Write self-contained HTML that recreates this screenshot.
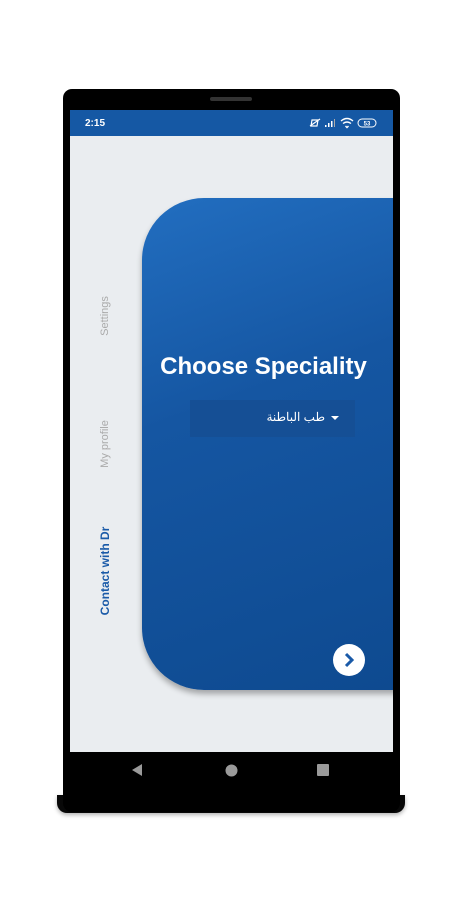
<!DOCTYPE html>
<html><head><meta charset="utf-8"><style>
*{margin:0;padding:0;box-sizing:border-box}
body{width:462px;height:901px;background:#fff;position:relative;overflow:hidden;font-family:"Liberation Sans",sans-serif}
.phone{position:absolute;left:63px;top:89px;width:337px;height:723px;background:#000;border-radius:9px}
.chin{position:absolute;left:57px;top:795px;width:348px;height:18px;background:#080808;border-radius:0 0 10px 10px;box-shadow:0 2px 4px rgba(0,0,0,.3)}
.speaker{position:absolute;left:210px;top:97px;width:42px;height:4px;background:#333;border-radius:2px}
.screen{position:absolute;left:70px;top:110px;width:323px;height:642px;background:#eaedf0;overflow:hidden}
.status{position:absolute;left:0;top:0;width:323px;height:26px;background:#1558a4;color:#fff;font-size:10px;font-weight:bold}
.card{position:absolute;left:72px;top:88px;width:260px;height:492px;border-radius:62px 0 0 62px;background:linear-gradient(160deg,#226ec0 0%,#1556a2 40%,#0e4a90 100%);box-shadow:0 4px 6px rgba(0,0,0,.3)}
.v{position:absolute;transform:rotate(-90deg);white-space:nowrap;font-size:11px;color:#aaa;transform-origin:center}
.nav{position:absolute;fill:#9a9a9a}
</style></head><body>
<div class="chin"></div>
<div class="phone"></div>
<div class="speaker"></div>
<div class="screen">
 <div class="status">
  <span style="position:absolute;left:15px;top:8px">2:15</span>
  <svg style="position:absolute;left:238px;top:6px" width="80" height="14" viewBox="0 0 80 14">
   <path d="M2 10 L12 3 M4 4 h6 l-1 6 h-6z" stroke="#fff" stroke-width="1.2" fill="none"/>
   <rect x="17" y="9" width="1.5" height="2" fill="#fff"/><rect x="20" y="7" width="1.5" height="4" fill="#fff"/><rect x="23" y="5" width="1.5" height="6" fill="#fff"/><rect x="26" y="3" width="1" height="8" fill="#aaa"/>
   <path d="M33 5 q6-5 12 0 M35 7.5 q4-3 8 0 M37.5 10 l1.5 1.5 1.5-1.5" stroke="#fff" stroke-width="1.4" fill="none"/>
   <rect x="50" y="3" width="18" height="8" rx="4" stroke="#fff" fill="none" stroke-width="1"/>
   <text x="59" y="9.5" font-size="6" fill="#fff" text-anchor="middle" font-family="Liberation Sans">53</text>
  </svg>
 </div>
 <div class="v" style="left:14px;top:200px;width:42px;text-align:center">Settings</div>
 <div class="v" style="left:7px;top:328px;width:56px;text-align:center">My profile</div>
 <div class="v" style="left:-12px;top:454px;width:94px;text-align:center;color:#1a5aa8;font-weight:bold;font-size:12px">Contact with Dr</div>
 <div class="card">
  <div style="position:absolute;left:-6px;width:255px;top:155px;text-align:center;color:#fff;font-weight:bold;font-size:24px;white-space:nowrap">Choose Speciality</div>
  <div style="position:absolute;left:48px;top:202px;width:165px;height:37px;background:#154f95;color:#fff;font-size:12px;font-family:'Liberation Sans','Noto Sans CJK SC',sans-serif">
   <span style="position:absolute;right:30px;top:10px" dir="rtl">طب الباطنة</span>
   <span style="position:absolute;right:16px;top:16px;border-left:4px solid transparent;border-right:4px solid transparent;border-top:4px solid #fff"></span>
  </div>
  <div style="position:absolute;left:191px;top:446px;width:32px;height:32px;border-radius:50%;background:#fff">
   <svg width="32" height="32" viewBox="0 0 32 32"><path d="M13 10 l6 6 -6 6" stroke="#1a5aa8" stroke-width="3" fill="none"/></svg>
  </div>
 </div>
</div>
<svg class="nav" style="left:130px;top:763px" width="14" height="14"><path d="M2 7 L12 1 V13Z"/></svg>
<svg class="nav" style="left:225px;top:764px" width="13" height="13"><circle cx="6.5" cy="6.5" r="6"/></svg>
<svg class="nav" style="left:317px;top:764px" width="13" height="13"><rect x="0" y="0" width="12" height="12" rx="1"/></svg>
</body></html>
